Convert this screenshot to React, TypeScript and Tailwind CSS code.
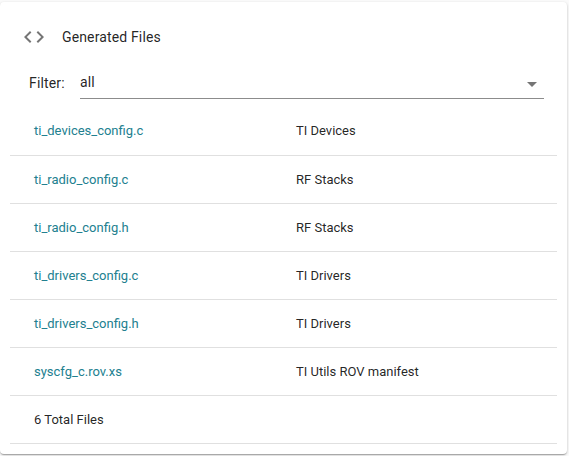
const files = [
  ["ti_devices_config.c", "TI Devices"],
  ["ti_radio_config.c", "RF Stacks"],
  ["ti_radio_config.h", "RF Stacks"],
  ["ti_drivers_config.c", "TI Drivers"],
  ["ti_drivers_config.h", "TI Drivers"],
  ["syscfg_c.rov.xs", "TI Utils ROV manifest"],
];

export default function App() {
  return (
    <div className="h-[456px] w-[569px] overflow-hidden bg-[#fafafa] pt-[2px] pr-[2px] font-[Roboto,sans-serif] text-[rgba(0,0,0,0.87)]">
      <main className="h-[452px] rounded-[4px] bg-white px-[10px] shadow-[0_1px_3px_rgba(0,0,0,0.2),0_1px_1px_rgba(0,0,0,0.14),0_2px_1px_-1px_rgba(0,0,0,0.12)]">
        <header className="flex h-[65px] items-center pt-[5px] pl-[12px]">
          <svg viewBox="0 0 24 24" className="h-6 w-6 fill-[#757575]">
            <path d="M9.4 16.6L4.8 12l4.6-4.6L8 6l-6 6 6 6 1.4-1.4zm5.2 0l4.6-4.6-4.6-4.6L16 6l6 6-6 6-1.4-1.4z" />
          </svg>
          <h1 className="ml-[16px] text-[14px] leading-5 tracking-[0.14px]">Generated Files</h1>
        </header>
        <div className="flex h-[32px] pr-[13px] pl-[19px] text-[14px] tracking-[0.14px]">
          <span className="w-[51px] pt-[6px] leading-5">Filter:</span>
          <div className="flex flex-1 justify-between border-b border-[#8c8c8c] pt-[5px] leading-5">
            <span>all</span>
            <svg viewBox="0 0 24 24" className="h-6 w-6 fill-[#757575]">
              <path d="M7 10l5 5 5-5z" />
            </svg>
          </div>
        </div>
        <div className="mt-[8px] text-[13px] leading-5">
          {files.map(([name, source]) => (
            <div key={name} className="flex h-[48px] items-center border-b border-[#e0e0e0] pt-px pl-[24px] first:h-[49px] first:pt-0">
              <span className="w-[262px] text-[#22808f]">{name}</span>
              <span>{source}</span>
            </div>
          ))}
          <div className="flex h-[48px] items-center border-b border-[#e0e0e0] pt-px pl-[24px]">6 Total Files</div>
        </div>
      </main>
    </div>
  );
}
